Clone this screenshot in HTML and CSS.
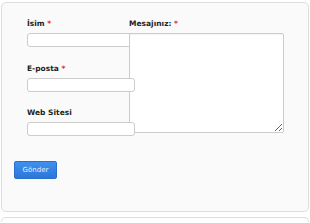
FILE: index.html
```html
<!DOCTYPE html>
<html lang="tr">
<head>
  <meta charset="UTF-8" />
  <meta name="viewport" content="width=device-width, initial-scale=1.0" />
  <title>Yorum Formu</title>
  <link rel="stylesheet" href="styles.css">
</head>
<body>
  <div class="card">
    <form class="comment-form">
      <div class="fields">
        <div class="col-left">
          <div class="field">
            <label for="author">İsim <span class="req">*</span></label>
            <input type="text" id="author" name="author">
          </div>
          <div class="field">
            <label for="email">E-posta <span class="req">*</span></label>
            <input class="over" type="text" id="email" name="email">
          </div>
          <div class="field">
            <label for="url">Web Sitesi</label>
            <input class="over" type="text" id="url" name="url">
          </div>
        </div>
        <div class="col-right">
          <label for="comment">Mesajınız: <span class="req">*</span></label>
          <textarea id="comment" name="comment"></textarea>
        </div>
      </div>
      <button type="submit" class="submit">Gönder</button>
    </form>
  </div>
  <div class="card next"></div>
</body>
</html>
```

FILE: styles.css
```css
body {
  margin: 0;
  background: #fff;
  font-family: "DejaVu Sans", Verdana, sans-serif;
}

.card {
  margin: 2px 1px 0;
  padding: 16px 12px 32px;
  background: #fafafa;
  border: 1px solid #ddd;
  border-radius: 5px;
}

.card.next {
  margin-top: 5px;
  height: 4px;
  padding: 0;
  background: #fff;
  border-bottom: none;
  border-radius: 5px 5px 0 0;
}

.fields {
  display: flex;
  padding-left: 13px;
}

.col-left {
  width: 102px;
  flex-shrink: 0;
}

.field {
  margin-bottom: 16.5px;
}

.field:last-child {
  margin-bottom: 0;
}

label {
  display: block;
  font-size: 7.5px;
  font-weight: bold;
  line-height: 10px;
  color: #222;
  margin-bottom: 4px;
  white-space: nowrap;
}

.req {
  color: #e8262b;
}

input {
  display: block;
  box-sizing: border-box;
  width: 108px;
  height: 14px;
  margin: 0;
  padding: 0 3px;
  border: 1px solid #ccc;
  border-radius: 3px;
  background: #fff;
}

input.over {
  position: relative;
  z-index: 2;
}

textarea {
  display: block;
  position: relative;
  z-index: 1;
  box-sizing: border-box;
  width: 155px;
  height: 100px;
  margin: 0;
  border: 1px solid #ccc;
  border-radius: 2px;
  background: #fff;
  box-shadow: inset 0 1px 1px rgba(0, 0, 0, 0.04);
}

.submit {
  display: block;
  margin-top: 25px;
  width: 43px;
  height: 18px;
  padding: 0;
  font-family: "DejaVu Sans", Verdana, sans-serif;
  font-size: 7px;
  color: #e4ecfa;
  background: linear-gradient(#3f90ee, #2b77da);
  border: 1px solid #2b6fcd;
  border-radius: 2px;
  cursor: pointer;
}
```
